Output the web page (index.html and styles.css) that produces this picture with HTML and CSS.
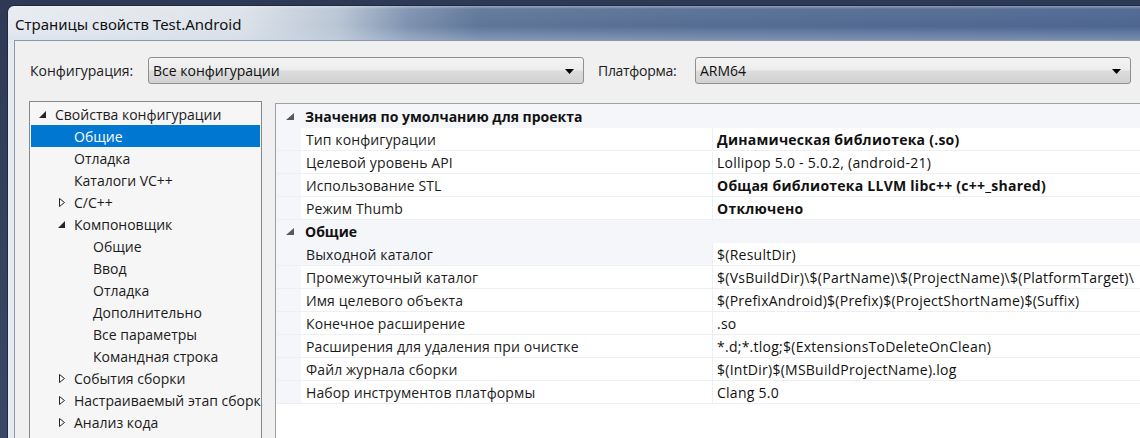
FILE: index.html
```html
<!DOCTYPE html>
<html lang="ru">
<head>
<meta charset="utf-8">
<title>Страницы свойств Test.Android</title>
<link rel="stylesheet" href="styles.css">
</head>
<body>
<div class="desktop">
  <div class="window">
    <div class="titlebar"><span class="title">Страницы свойств Test.Android</span></div>
    <div class="client">
      <div class="config-row">
        <span class="lbl lbl-config">Конфигурация:</span>
        <div class="combo combo-config"><span>Все конфигурации</span><svg class="arrow" width="9" height="5" viewBox="0 0 9 5"><path d="M0 0H9L4.5 5Z" fill="#000"/></svg></div>
        <span class="lbl lbl-platform">Платформа:</span>
        <div class="combo combo-platform"><span>ARM64</span><svg class="arrow" width="9" height="5" viewBox="0 0 9 5"><path d="M0 0H9L4.5 5Z" fill="#000"/></svg></div>
      </div>
      <div class="main">
        <div class="tree">
          <div class="node l0"><svg class="exp" width="7" height="7" viewBox="0 0 7 7"><path d="M7 0V7H0Z" fill="#262626"/></svg><span>Свойства конфигурации</span></div>
          <div class="node l1 sel"><span>Общие</span></div>
          <div class="node l1"><span>Отладка</span></div>
          <div class="node l1"><span>Каталоги VC++</span></div>
          <div class="node l1 has"><svg class="col" width="6" height="9" viewBox="0 0 6 9"><path d="M0.5 0.5L5.5 4.5L0.5 8.5Z" fill="none" stroke="#262626"/></svg><span>C/C++</span></div>
          <div class="node l1 has"><svg class="exp" width="7" height="7" viewBox="0 0 7 7"><path d="M7 0V7H0Z" fill="#262626"/></svg><span>Компоновщик</span></div>
          <div class="node l2"><span>Общие</span></div>
          <div class="node l2"><span>Ввод</span></div>
          <div class="node l2"><span>Отладка</span></div>
          <div class="node l2"><span>Дополнительно</span></div>
          <div class="node l2"><span>Все параметры</span></div>
          <div class="node l2"><span>Командная строка</span></div>
          <div class="node l1 has"><svg class="col" width="6" height="9" viewBox="0 0 6 9"><path d="M0.5 0.5L5.5 4.5L0.5 8.5Z" fill="none" stroke="#262626"/></svg><span>События сборки</span></div>
          <div class="node l1 has"><svg class="col" width="6" height="9" viewBox="0 0 6 9"><path d="M0.5 0.5L5.5 4.5L0.5 8.5Z" fill="none" stroke="#262626"/></svg><span>Настраиваемый этап сборки</span></div>
          <div class="node l1 has"><svg class="col" width="6" height="9" viewBox="0 0 6 9"><path d="M0.5 0.5L5.5 4.5L0.5 8.5Z" fill="none" stroke="#262626"/></svg><span>Анализ кода</span></div>
        </div>
        <div class="grid">
          <div class="cat cat-first"><span class="cat-exp"><svg width="8" height="7" viewBox="0 0 8 7"><path d="M8 0V7H0Z" fill="#595959"/></svg></span><span class="cat-name">Значения по умолчанию для проекта</span></div>
          <div class="row"><span class="name">Тип конфигурации</span><span class="val b">Динамическая библиотека (.so)</span></div>
          <div class="row"><span class="name">Целевой уровень API</span><span class="val">Lollipop 5.0 - 5.0.2, (android-21)</span></div>
          <div class="row"><span class="name">Использование STL</span><span class="val b">Общая библиотека LLVM libc++ (c++_shared)</span></div>
          <div class="row"><span class="name">Режим Thumb</span><span class="val b">Отключено</span></div>
          <div class="cat"><span class="cat-exp"><svg width="8" height="7" viewBox="0 0 8 7"><path d="M8 0V7H0Z" fill="#595959"/></svg></span><span class="cat-name">Общие</span></div>
          <div class="row hot"><span class="name">Выходной каталог</span><span class="val">$(ResultDir)</span></div>
          <div class="row"><span class="name">Промежуточный каталог</span><span class="val">$(VsBuildDir)\$(PartName)\$(ProjectName)\$(PlatformTarget)\</span></div>
          <div class="row"><span class="name">Имя целевого объекта</span><span class="val">$(PrefixAndroid)$(Prefix)$(ProjectShortName)$(Suffix)</span></div>
          <div class="row"><span class="name">Конечное расширение</span><span class="val">.so</span></div>
          <div class="row"><span class="name">Расширения для удаления при очистке</span><span class="val">*.d;*.tlog;$(ExtensionsToDeleteOnClean)</span></div>
          <div class="row"><span class="name">Файл журнала сборки</span><span class="val">$(IntDir)$(MSBuildProjectName).log</span></div>
          <div class="row"><span class="name">Набор инструментов платформы</span><span class="val">Clang 5.0</span></div>
        </div>
      </div>
    </div>
  </div>
</div>
</body>
</html>
```
FILE: styles.css
```css
* { box-sizing: border-box; }
html, body { margin: 0; padding: 0; }
body {
  width: 1140px;
  height: 438px;
  overflow: hidden;
  background: #34425e;
  font-family: "Open Sans", "Noto Sans", "DejaVu Sans", sans-serif;
  font-size: 14px;
  color: #1b1b1b;
}
.desktop {
  height: 438px;
  padding: 5px 0 0 7px;
  background: linear-gradient(to bottom, #2e3a55 0, #3a4865 100%);
}
.window {
  height: 433px;
  border-top-left-radius: 7px;
  border-top: 1px solid #1f2a40;
  border-left: 1px solid #1f2a40;
  background: linear-gradient(to right, #e6ebf1 0, #dde3ea 230px, #b9c5d4 330px, #7e92b0 400px, #5f7699 470px, #566d93 700px, #4d6690 100%);
  display: flex;
  flex-direction: column;
  overflow: hidden;
}
.titlebar {
  height: 34px;
  flex: none;
  display: flex;
  align-items: center;
  padding-left: 7px;
  background: linear-gradient(to bottom, rgba(255,255,255,0.35) 0, rgba(255,255,255,0.05) 3px, rgba(255,255,255,0) 60%, rgba(200,215,235,0.35) 100%);
}
.title {
  font-family: "Noto Sans", "Open Sans", sans-serif;
  font-size: 15px;
  color: #111;
  padding-top: 1px;
}
.client {
  flex: 1;
  margin-left: 6px;
  background: #f0f0f0;
  border-top: 1px solid #8c98a8;
  border-left: 1px solid #8c98a8;
  display: flex;
  flex-direction: column;
}
.config-row {
  display: flex;
  align-items: center;
  height: 27px;
  margin-top: 16px;
  padding-left: 15px;
}
.lbl { white-space: nowrap; color: #1b1b1b; }
.lbl-config { width: 118px; }
.lbl-platform { margin-left: 14px; width: 97px; letter-spacing: -0.3px; }
.combo {
  height: 27px;
  border: 1px solid #8e8f8f;
  border-radius: 3px;
  background: linear-gradient(to bottom, #f4f4f4 0, #ececec 48%, #dcdcdc 52%, #d2d2d2 100%);
  display: flex;
  align-items: center;
  justify-content: space-between;
  padding: 0 9px 0 4px;
  color: #111;
}
.combo-config { width: 436px; }
.combo-platform { width: 436px; }
.arrow { flex: none; margin-top: 1px; }
.main {
  display: flex;
  align-items: flex-start;
  margin-top: 17px;
  padding-left: 14px;
  flex: 1;
  min-height: 0;
}
.tree {
  width: 233px;
  height: 340px;
  flex: none;
  border: 1px solid #828790;
  background: #f6f6f6;
  padding: 1px;
  overflow: hidden;
}
.node {
  height: 22px;
  display: flex;
  align-items: center;
  white-space: nowrap;
  position: relative;
}
.node span { display: block; }
.node.l0 { padding-left: 24px; }
.node.l1 { padding-left: 43px; }
.node.l2 { padding-left: 62px; }
.node.l0 .exp { position: absolute; left: 8px; top: 8px; }
.node.l1 .exp { position: absolute; left: 27px; top: 8px; }
.node.l1 .col { position: absolute; left: 28px; top: 7px; }
.node.sel { background: #0078d2; color: #fff; }
.grid {
  flex: 1;
  margin-left: 13px;
  margin-top: 2px;
  height: 340px;
  border-top: 1px solid #a0a0a0;
  border-left: 1px solid #a0a0a0;
  background: #fff;
  overflow: hidden;
}
.cat {
  height: 23px;
  display: flex;
  align-items: center;
  background: #f4f6fa;
  font-weight: 700;
  color: #111;
  white-space: nowrap;
}
.cat-first { height: 24px; }
.cat-exp { width: 25px; flex: none; display: flex; justify-content: flex-end; padding-right: 7px; }
.cat-name { padding-left: 4px; }
.row {
  height: 23px;
  display: flex;
  white-space: nowrap;
}
.row .name {
  width: 437px;
  flex: none;
  padding-left: 30px;
  display: flex;
  align-items: center;
  border-bottom: 1px solid #eceff3;
  border-right: 1px solid #eceff3;
  background: linear-gradient(to right, #f4f6fa 0, #f4f6fa 25px, #fff 25px);
  letter-spacing: 0.1px;
}
.row .val {
  flex: 1;
  padding-left: 4px;
  display: flex;
  align-items: center;
  border-bottom: 1px solid #eceff3;
  color: #111;
  letter-spacing: 0.25px;
}
.row.hot .name { background: #f4f6fa; }
.val.b { font-weight: 700; }
```
